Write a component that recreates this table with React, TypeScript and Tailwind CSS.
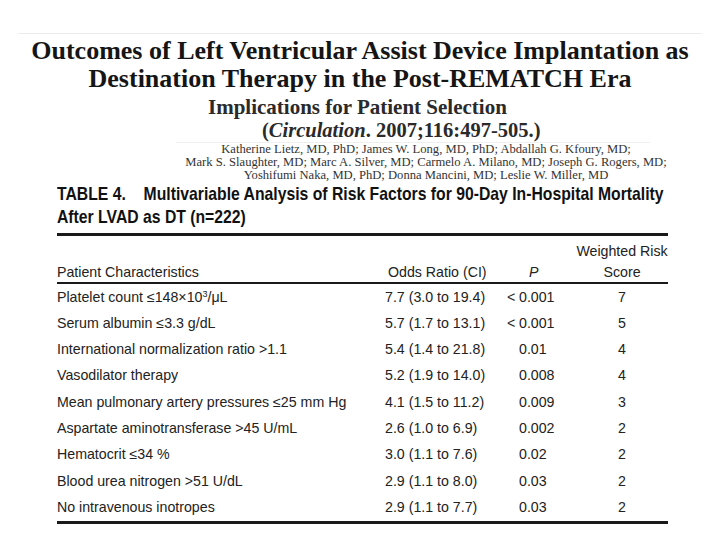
import React from "react";

type Row = {
  label: React.ReactNode;
  odds: string;
  p: string;
  lt?: boolean;
  score: string;
};

const rows: Row[] = [
  {
    label: (
      <>
        Platelet count ≤148×10<sup className="text-[9px]">3</sup>/μL
      </>
    ),
    odds: "7.7 (3.0 to 19.4)",
    p: "0.001",
    lt: true,
    score: "7",
  },
  { label: "Serum albumin ≤3.3 g/dL", odds: "5.7 (1.7 to 13.1)", p: "0.001", lt: true, score: "5" },
  { label: "International normalization ratio >1.1", odds: "5.4 (1.4 to 21.8)", p: "0.01", score: "4" },
  { label: "Vasodilator therapy", odds: "5.2 (1.9 to 14.0)", p: "0.008", score: "4" },
  { label: "Mean pulmonary artery pressures ≤25 mm Hg", odds: "4.1 (1.5 to 11.2)", p: "0.009", score: "3" },
  { label: "Aspartate aminotransferase >45 U/mL", odds: "2.6 (1.0 to 6.9)", p: "0.002", score: "2" },
  { label: "Hematocrit ≤34 %", odds: "3.0 (1.1 to 7.6)", p: "0.02", score: "2" },
  { label: "Blood urea nitrogen >51 U/dL", odds: "2.9 (1.1 to 8.0)", p: "0.03", score: "2" },
  { label: "No intravenous inotropes", odds: "2.9 (1.1 to 7.7)", p: "0.03", score: "2" },
];

const serif = "font-['Liberation_Serif','Times_New_Roman',serif]";
const sans = "font-['Liberation_Sans',Arial,sans-serif]";

const App: React.FC = () => {
  return (
    <div className="w-[720px] h-[540px] bg-white overflow-hidden">
      {/* faint scan edge */}
      <div className="pt-[33px] px-[18px]">
        <div className="border-t border-[#ececec]" />
      </div>

      {/* article heading */}
      <div className={`${serif} text-[#151515] font-bold text-center text-[26px] leading-[28px] pt-[3px]`}>
        <div>Outcomes of Left Ventricular Assist Device Implantation as</div>
        <div>Destination Therapy in the Post-REMATCH Era</div>
      </div>

      <div className={`${serif} font-bold text-[#2a2a2a] text-[21px] leading-[23px] pt-[3px]`}>
        <div className="pl-[208px]">Implications for Patient Selection</div>
        <div className="pl-[262px] text-[20.5px]">
          (<span className="italic">Circulation</span>. 2007;116:497-505.)
        </div>
      </div>

      <div className="pl-[176px] pr-[70px]">
        <div className="border-t border-[#efefef]" />
      </div>

      <div className={`${serif} text-[#333] text-[12.6px] leading-[13px] text-center pl-[132px]`}>
        <div>Katherine Lietz, MD, PhD; James W. Long, MD, PhD; Abdallah G. Kfoury, MD;</div>
        <div>Mark S. Slaughter, MD; Marc A. Silver, MD; Carmelo A. Milano, MD; Joseph G. Rogers, MD;</div>
        <div>Yoshifumi Naka, MD, PhD; Donna Mancini, MD; Leslie W. Miller, MD</div>
      </div>

      {/* table */}
      <div className={`${sans} ml-[57px] w-[611px]`}>
        {/* condensed bold caption */}
        <div className="font-bold text-[#111] text-[17.7px] leading-[23px] pt-[1px] whitespace-nowrap origin-left scale-x-[0.89]">
          <div>
            TABLE 4.<span className="inline-block w-[20px]" />Multivariable Analysis of Risk Factors for 90-Day In-Hospital Mortality
          </div>
          <div>After LVAD as DT (n=222)</div>
        </div>

        <div className="mt-[4px] border-t-[3px] border-[#1a1a1a]" />

        <div className="grid grid-cols-[328px_120px_71px_92px] text-[#222] text-[14.2px] leading-[20.5px] pt-[5px]">
          <div className="self-end">Patient Characteristics</div>
          <div className="self-end pl-[3px]">Odds Ratio (CI)</div>
          <div className="self-end pl-[24px] italic">P</div>
          <div className="text-center whitespace-nowrap">
            <div>Weighted Risk</div>
            <div>Score</div>
          </div>
        </div>

        <div className="border-t-[2.5px] border-[#1a1a1a]" />

        <div className="text-[#222] text-[14.2px] whitespace-nowrap">
          {rows.map((r, i) => (
            <div key={i} className="grid grid-cols-[328px_120px_71px_92px] h-[26.3px] items-center">
              <div>{r.label}</div>
              <div>{r.odds}</div>
              <div className="pl-[14px]">
                {r.lt && <span className="-ml-[12px] inline-block w-[12px]">&lt;</span>}
                {r.p}
              </div>
              <div className="text-center">{r.score}</div>
            </div>
          ))}
        </div>

        <div className="border-t-[3px] border-[#1a1a1a]" />
      </div>
    </div>
  );
};

export default App;
